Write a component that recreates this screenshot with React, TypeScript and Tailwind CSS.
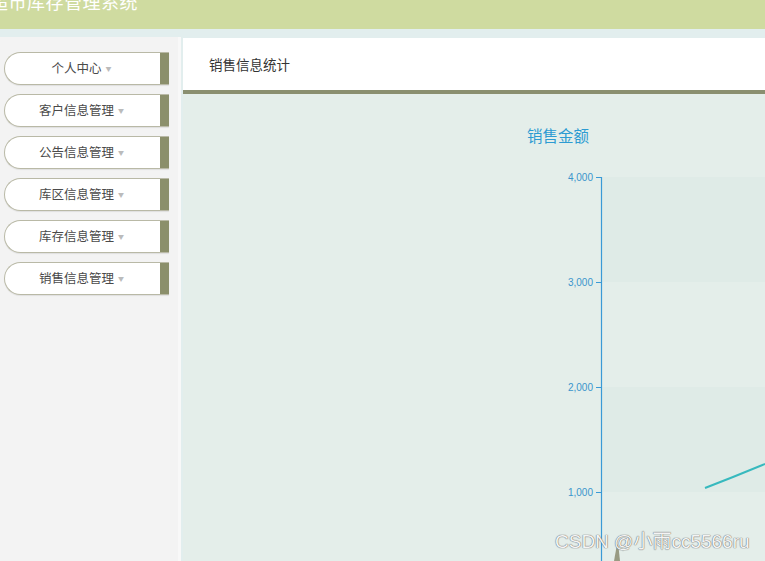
const menus = ['个人中心', '客户信息管理', '公告信息管理', '库区信息管理', '库存信息管理', '销售信息管理'];

const cjk = { fontFamily: '"Noto Sans CJK SC", "Noto Sans", sans-serif' };

function MenuButton({ label }: { label: string }) {
  return (
    <div className="flex h-[33px] w-[165px] items-stretch rounded-l-[17px] border border-r-0 border-[#b9b9a6] bg-white shadow-[0_1px_1px_rgba(0,0,0,0.08)]">
      <div className="flex flex-1 items-center justify-center gap-[4px] pr-[2px] text-[12.5px] text-[#4a4a4a]">
        <span>{label}</span>
        <span className="text-[6px] leading-none text-[#bbb]">▼</span>
      </div>
      <div className="w-[9px] bg-[#8b8f6b]" />
    </div>
  );
}

function SalesChart() {
  const ticks = [
    { v: '4,000', y: 83 },
    { v: '3,000', y: 188 },
    { v: '2,000', y: 293 },
    { v: '1,000', y: 398 },
  ];
  return (
    <svg width="582" height="467" className="block">
      {/* split areas */}
      <rect x="419" y="83" width="163" height="105" fill="#dfebe7" />
      <rect x="419" y="188" width="163" height="105" fill="#e4eeea" />
      <rect x="419" y="293" width="163" height="105" fill="#dfebe7" />
      <rect x="419" y="398" width="163" height="105" fill="#e4eeea" />
      <text x="375" y="48" textAnchor="middle" fontSize="15.5" fill="#2d9bd2" style={cjk}>
        销售金额
      </text>
      <line x1="418.5" y1="83" x2="418.5" y2="467" stroke="#3a9ad6" strokeWidth="1.2" />
      {ticks.map((t) => (
        <g key={t.v}>
          <line x1="413" y1={t.y + 0.5} x2="418" y2={t.y + 0.5} stroke="#3a9ad6" />
          <text
            x="410"
            y={t.y + 3.5}
            textAnchor="end"
            fontSize="10"
            fill="#3a95cc"
            style={{ fontFamily: '"Liberation Sans", Arial, sans-serif' }}
          >
            {t.v}
          </text>
        </g>
      ))}
      <path d="M522 394 L550 383 L582 370" fill="none" stroke="#37b9be" strokeWidth="2" />
      <polygon points="431,467 433.5,453 434.5,450 435.5,453 437,467" fill="#999b83" />
    </svg>
  );
}

export default function App() {
  return (
    <div className="relative flex h-[561px] w-[765px] flex-col overflow-hidden bg-[#e2eeee]" style={cjk}>
      <div className="h-[29px] shrink-0 overflow-hidden bg-[#cfdba0]">
        <div className="-ml-[10px] -mt-[11px] whitespace-nowrap text-[18px] leading-[24px] tracking-[0.5px] text-white">
          超市库存管理系统
        </div>
      </div>
      <div className="flex flex-1 pt-[8px]">
        <aside className="flex w-[181px] shrink-0 flex-col gap-[9px] border-r-[3px] border-[#f8f8f8] bg-[#f3f3f3] pl-[4px] pt-[15px]">
          {menus.map((m) => (
            <MenuButton key={m} label={m} />
          ))}
        </aside>
        <main className="flex flex-1 flex-col pl-[2px] pt-[1px]">
          <div className="flex h-[56px] shrink-0 items-center border-b-[4px] border-[#8a8f70] bg-white pl-[26px] text-[13.5px] text-[#333]">
            销售信息统计
          </div>
          <div className="flex-1 bg-[#e4eeea]">
            <SalesChart />
          </div>
        </main>
      </div>
      <div
        className="absolute left-[555px] top-[530px] text-[19px] leading-[24px] text-[#f4f4f4]"
        style={{ textShadow: '0 0 1px #666, 0 0 1px #666', fontFamily: '"Liberation Sans", "Noto Sans CJK SC", sans-serif' }}
      >
        CSDN @小雨cc5566ru
      </div>
    </div>
  );
}
